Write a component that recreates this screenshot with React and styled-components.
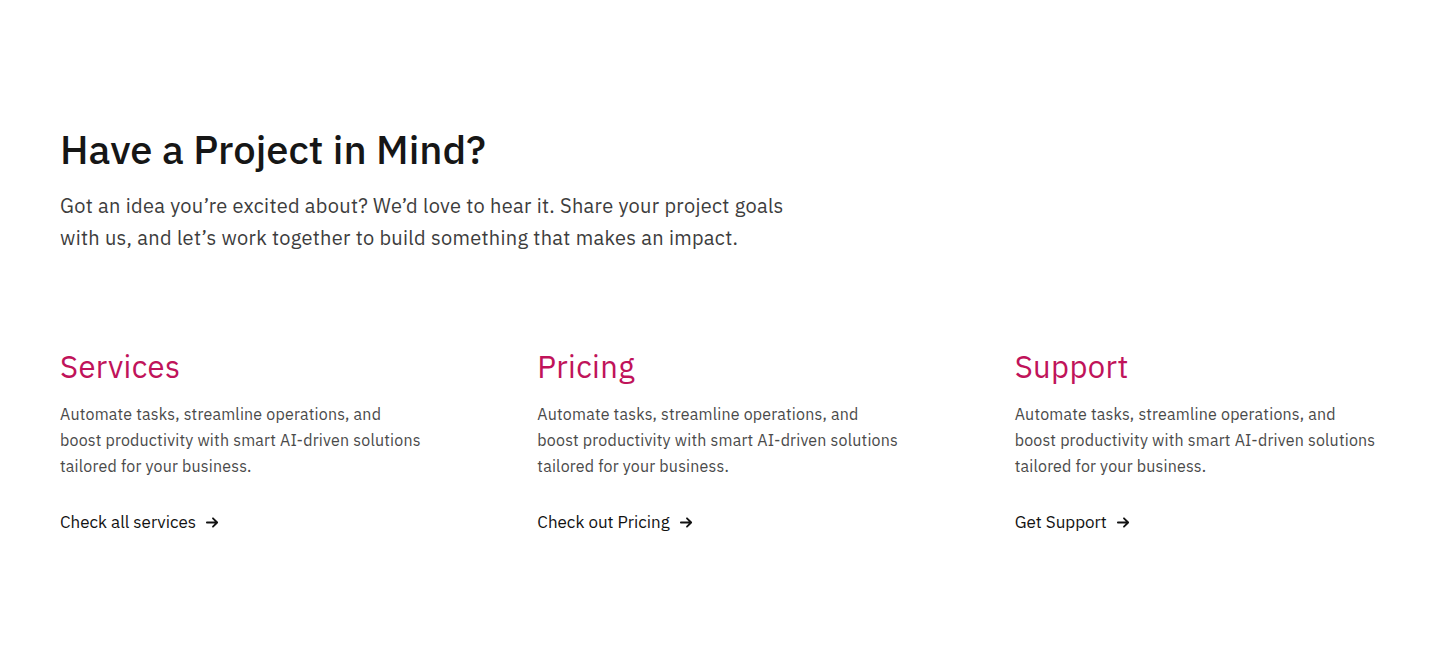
import styled, { createGlobalStyle } from "styled-components";

const GlobalStyle = createGlobalStyle`
  body {
    margin: 0;
    background: #ffffff;
    font-family: "IBM Plex Sans", Inter, "Noto Sans", sans-serif;
    -webkit-font-smoothing: antialiased;
  }
  * {
    box-sizing: border-box;
  }
`;

const cards = [
  { title: "Services", link: "Check all services" },
  { title: "Pricing", link: "Check out Pricing" },
  { title: "Support", link: "Get Support" },
];

const ArrowIcon = () => (
  <svg width="15" height="15" viewBox="0 0 16 16" fill="none">
    <path
      d="M2 8h11M8.5 3.5 13 8l-4.5 4.5"
      stroke="currentColor"
      strokeWidth="1.9"
      strokeLinecap="round"
      strokeLinejoin="round"
    />
  </svg>
);

const App = () => {
  return (
    <>
      <GlobalStyle />
      <Wrapper>
        <Intro>
          <h2>Have a Project in Mind?</h2>
          <p>
            Got an idea you’re excited about? We’d love to hear it. Share your
            project goals with us, and let’s work together to build something
            that makes an impact.
          </p>
        </Intro>
        <CardGrid>
          {cards.map((card) => (
            <Card key={card.title}>
              <h3>{card.title}</h3>
              <p>
                Automate tasks, streamline operations, and boost productivity
                with smart AI-driven solutions tailored for your business.
              </p>
              <CardLink href="#">
                {card.link}
                <ArrowIcon />
              </CardLink>
            </Card>
          ))}
        </CardGrid>
      </Wrapper>
    </>
  );
};

const Wrapper = styled.section`
  padding: 125px 60px 120px;
  display: flex;
  flex-direction: column;
  gap: 95px;
`;

const Intro = styled.div`
  display: flex;
  flex-direction: column;
  gap: 17px;

  h2 {
    margin: 0;
    font-size: 40px;
    line-height: 48px;
    font-weight: 500;
    color: #161616;
    letter-spacing: 0;
  }

  p {
    margin: 0;
    max-width: 760px;
    font-size: 20px;
    line-height: 32px;
    color: #3d3d3d;
    letter-spacing: 0.3px;
  }
`;

const CardGrid = styled.div`
  display: grid;
  grid-template-columns: repeat(3, 1fr);
  column-gap: 112px;
`;

const Card = styled.div`
  display: flex;
  flex-direction: column;
  align-items: flex-start;

  h3 {
    margin: 0 0 16px;
    font-size: 31px;
    line-height: 36px;
    font-weight: 400;
    color: #c0135a;
    letter-spacing: 0.4px;
  }

  p {
    margin: 0 0 31px;
    max-width: 370px;
    font-size: 16px;
    line-height: 26px;
    color: #4a4a4a;
    letter-spacing: 0.2px;
  }
`;

const CardLink = styled.a`
  display: inline-flex;
  align-items: center;
  gap: 9px;
  font-size: 17px;
  line-height: 24px;
  color: #121212;
  letter-spacing: 0;
  text-decoration: none;
`;

export default App;
